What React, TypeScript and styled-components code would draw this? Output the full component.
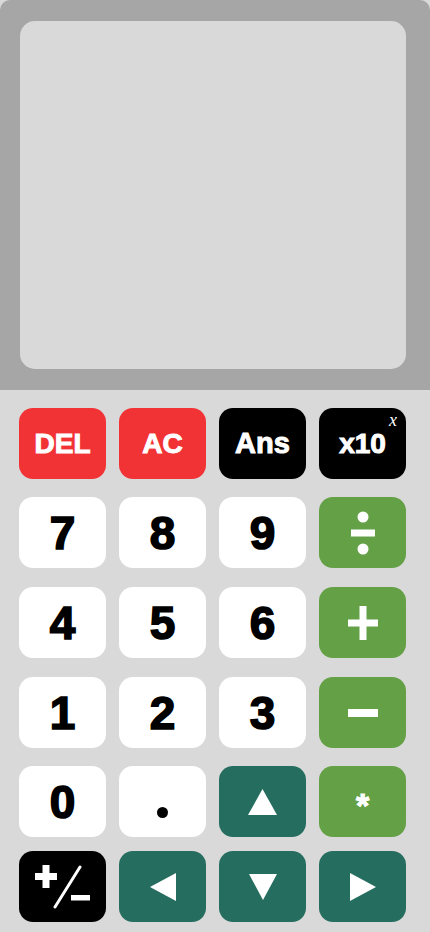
import React from "react";
import styled, { createGlobalStyle } from "styled-components";

const Global = createGlobalStyle`
  html, body { margin: 0; padding: 0; background: #d9d9d9; }
  body { font-family: "Liberation Sans", Arial, sans-serif; }
  * { box-sizing: border-box; }
`;

const Page = styled.div`
  width: 430px;
  height: 932px;
  display: flex;
  flex-direction: column;
  background: #d9d9d9;
  overflow: hidden;
`;

const ScreenArea = styled.div`
  height: 390px;
  background: #a6a6a6;
  border-radius: 10px 10px 0 0;
  padding: 21px 24px 21px 20px;
  display: flex;
`;

const Display = styled.div`
  flex: 1;
  background: #d9d9d9;
  border-radius: 15px;
`;

const Keypad = styled.div`
  display: flex;
  flex-direction: column;
  padding: 18px 24px 0 19px;
`;

const Row = styled.div<{ $gapTop: number }>`
  display: grid;
  grid-template-columns: repeat(4, 87px);
  column-gap: 13px;
  margin-top: ${(p) => p.$gapTop}px;
`;

type Tone = "red" | "black" | "white" | "green" | "teal";

const tones: Record<Tone, { bg: string; fg: string }> = {
  red: { bg: "#f23336", fg: "#ffffff" },
  black: { bg: "#000000", fg: "#ffffff" },
  white: { bg: "#ffffff", fg: "#000000" },
  green: { bg: "#63a046", fg: "#ffffff" },
  teal: { bg: "#256d5f", fg: "#ffffff" },
};

const Key = styled.button<{ $tone: Tone; $size?: number }>`
  position: relative;
  height: 71px;
  border: none;
  border-radius: 14px;
  padding: 0;
  margin: 0;
  display: flex;
  align-items: center;
  justify-content: center;
  background: ${(p) => tones[p.$tone].bg};
  color: ${(p) => tones[p.$tone].fg};
  font-family: "Liberation Sans", Arial, sans-serif;
  font-weight: 700;
  font-size: ${(p) => p.$size ?? 46}px;
  -webkit-text-stroke: ${(p) => ((p.$size ?? 46) > 36 ? 1.6 : 1)}px currentColor;
  line-height: 1;
  cursor: pointer;
`;

const Sup = styled.span`
  position: absolute;
  top: 3px;
  right: 9px;
  font-family: "Liberation Serif", "DejaVu Serif", serif;
  font-style: italic;
  font-weight: 400;
  font-size: 18px;
  -webkit-text-stroke: 0;
`;

const Word = styled.span<{ $shift?: number }>`
  display: block;
  transform: translateY(${(p) => p.$shift ?? 0}px);
`;

const Icon = styled.svg`
  display: block;
  fill: #ffffff;
`;

const Divide = () => (
  <Icon width="24" height="44" viewBox="0 0 24 44">
    <circle cx="12" cy="6" r="5.5" />
    <rect x="0" y="18.5" width="24" height="7" />
    <circle cx="12" cy="38" r="5.5" />
  </Icon>
);

const Plus = () => (
  <Icon width="30" height="34" viewBox="0 0 30 34">
    <rect x="0" y="13.5" width="30" height="7" />
    <rect x="11.5" y="0" width="7" height="34" />
  </Icon>
);

const Minus = () => (
  <Icon width="30" height="8" viewBox="0 0 30 8">
    <rect x="0" y="0" width="30" height="8" />
  </Icon>
);

const Dot = styled.span`
  display: block;
  width: 11px;
  height: 11px;
  margin-top: 22px;
  border-radius: 50%;
  background: #000000;
`;

const Tri = ({ dir }: { dir: "up" | "down" | "left" | "right" }) => {
  const pts = {
    up: "14.5,0 29,26 0,26",
    down: "0,0 28,0 14,26",
    left: "0,14 26,0 26,28",
    right: "0,0 26,14 0,28",
  }[dir];
  const w = dir === "up" ? 29 : dir === "down" ? 28 : 26;
  const h = dir === "up" || dir === "down" ? 26 : 28;
  return (
    <Icon width={w} height={h} viewBox={`0 0 ${w} ${h}`}>
      <polygon points={pts} />
    </Icon>
  );
};

const PlusMinus = () => (
  <Icon width="56" height="44" viewBox="0 0 56 44">
    <rect x="0" y="8" width="22" height="7" />
    <rect x="7.5" y="0" width="7" height="23" />
    <line x1="45" y1="2" x2="20" y2="42" stroke="#ffffff" strokeWidth="3" strokeLinecap="round" />
    <rect x="36" y="30" width="19" height="5.5" />
  </Icon>
);

export default function App() {
  return (
    <Page>
      <Global />
      <ScreenArea>
        <Display />
      </ScreenArea>
      <Keypad>
        <Row $gapTop={0}>
          <Key $tone="red" $size={28}><Word>DEL</Word></Key>
          <Key $tone="red" $size={28}><Word>AC</Word></Key>
          <Key $tone="black" $size={29}><Word>Ans</Word></Key>
          <Key $tone="black" $size={28}>
            <Word>x10</Word>
            <Sup>x</Sup>
          </Key>
        </Row>
        <Row $gapTop={18}>
          <Key $tone="white">7</Key>
          <Key $tone="white">8</Key>
          <Key $tone="white">9</Key>
          <Key $tone="green"><Divide /></Key>
        </Row>
        <Row $gapTop={19}>
          <Key $tone="white">4</Key>
          <Key $tone="white">5</Key>
          <Key $tone="white">6</Key>
          <Key $tone="green"><Plus /></Key>
        </Row>
        <Row $gapTop={19}>
          <Key $tone="white">1</Key>
          <Key $tone="white">2</Key>
          <Key $tone="white">3</Key>
          <Key $tone="green"><Minus /></Key>
        </Row>
        <Row $gapTop={18}>
          <Key $tone="white">0</Key>
          <Key $tone="white" aria-label="."><Dot /></Key>
          <Key $tone="teal"><Tri dir="up" /></Key>
          <Key $tone="green" $size={34}><Word $shift={3}>*</Word></Key>
        </Row>
        <Row $gapTop={14}>
          <Key $tone="black"><PlusMinus /></Key>
          <Key $tone="teal"><Tri dir="left" /></Key>
          <Key $tone="teal"><Tri dir="down" /></Key>
          <Key $tone="teal"><Tri dir="right" /></Key>
        </Row>
      </Keypad>
    </Page>
  );
}
